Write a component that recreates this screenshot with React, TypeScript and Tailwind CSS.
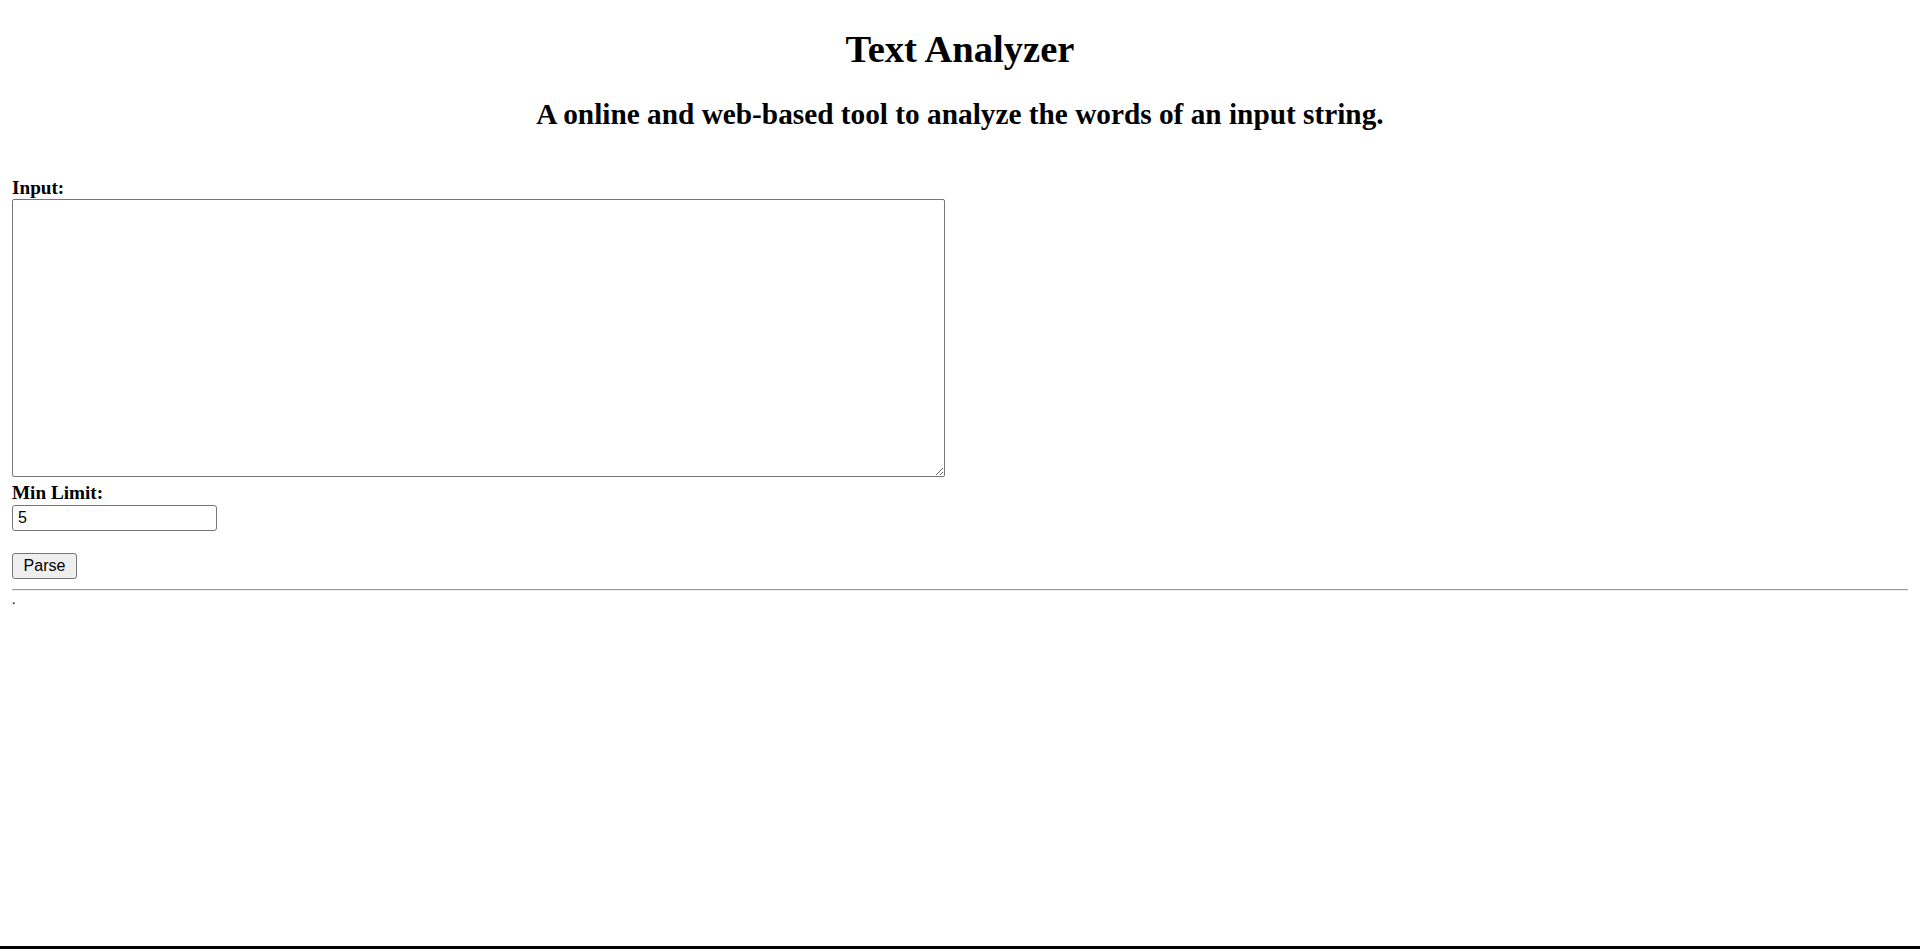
import React from "react";

export default function App() {
  return (
    <div className="h-screen flex flex-col bg-white text-black font-['Liberation_Serif','Times_New_Roman',serif]">
      <div className="px-[12px]">
        <h1 className="text-center text-[38.6px] font-bold leading-[44px] mt-[27px]">Text Analyzer</h1>
        <h2 className="text-center text-[29.3px] font-bold leading-[33px] mt-[27px]">
          A online and web-based tool to analyze the words of an input string.
        </h2>
        <label className="block mt-[46px] text-[19.2px] font-bold leading-[22px]">Input:</label>
        <textarea className="block w-[933px] h-[278px] border border-[#767676] rounded-[2px] bg-white p-[2px] outline-none font-['Liberation_Mono',monospace] text-[16px]" />
        <label className="block mt-[5px] text-[19.2px] font-bold leading-[22px]">Min Limit:</label>
        <input
          defaultValue="5"
          className="block mt-[1px] w-[205px] h-[26px] border border-[#767676] rounded-[3px] px-[5px] bg-white outline-none font-['Liberation_Sans',Arial,sans-serif] text-[16px]"
        />
        <button className="block mt-[22px] w-[65px] h-[26px] border border-[#767676] rounded-[3px] bg-[#efefef] font-['Liberation_Sans',Arial,sans-serif] text-[16px] leading-none text-black">
          Parse
        </button>
        <div className="mt-[10px] border-t border-t-[#9a9a9a] border-b border-b-[#eeeeee]" />
        <div className="text-[14px] leading-[12px] mt-[3px]">.</div>
      </div>
      <div className="mt-auto h-[3px] bg-black" />
    </div>
  );
}
